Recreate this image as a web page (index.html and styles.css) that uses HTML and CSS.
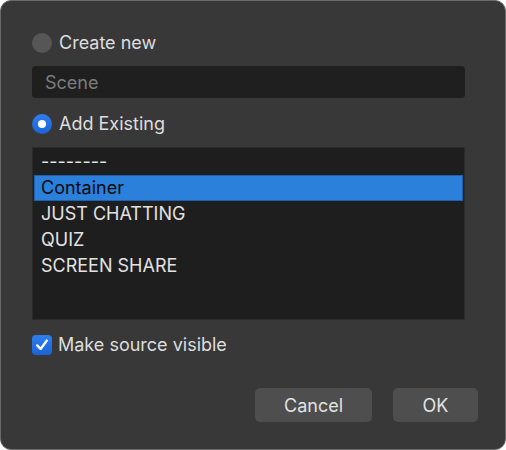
FILE: index.html
```html
<!DOCTYPE html>
<html>
<head>
<meta charset="utf-8">
<link rel="stylesheet" href="styles.css">
</head>
<body>
<div class="window">
  <div class="option">
    <span class="radio"></span>
    <span class="label">Create new</span>
  </div>
  <div class="field">Scene</div>
  <div class="option option-existing">
    <span class="radio radio-on"><span class="dot"></span></span>
    <span class="label">Add Existing</span>
  </div>
  <ul class="list">
    <li class="row">--------</li>
    <li class="row row-selected">Container</li>
    <li class="row">JUST CHATTING</li>
    <li class="row">QUIZ</li>
    <li class="row">SCREEN SHARE</li>
  </ul>
  <div class="option option-check">
    <span class="check">
      <svg width="20" height="20" viewBox="0 0 20 20"><path d="M5.2 10.4 L8.6 14 L14.8 5.6" fill="none" stroke="#fff" stroke-width="2.4" stroke-linecap="round" stroke-linejoin="round"/></svg>
    </span>
    <span class="label">Make source visible</span>
  </div>
  <div class="buttons">
    <button class="btn btn-cancel">Cancel</button>
    <button class="btn btn-ok">OK</button>
  </div>
</div>
</body>
</html>
```
FILE: styles.css
```css
html, body {
  margin: 0;
  padding: 0;
  background: #ffffff;
}
.window {
  box-sizing: border-box;
  width: 506px;
  height: 450px;
  background: #383838;
  border: 1px solid #6a6a6a;
  border-radius: 11px;
  padding: 32px 40px 0 31px;
  display: flex;
  flex-direction: column;
  font-family: Inter, "Liberation Sans", sans-serif;
  font-size: 18px;
  color: #dedede;
}
.option {
  display: flex;
  align-items: center;
  height: 20px;
  gap: 7px;
}
.label {
  line-height: 20px;
}
.radio {
  box-sizing: border-box;
  width: 20px;
  height: 20px;
  border-radius: 50%;
  background: #565656;
  display: flex;
  align-items: center;
  justify-content: center;
}
.radio-on {
  background: linear-gradient(#2f7ef0, #1a63d6);
}
.dot {
  width: 8px;
  height: 8px;
  border-radius: 50%;
  background: #ffffff;
}
.field {
  margin-top: 13px;
  height: 32px;
  background: #1f1f1f;
  border-radius: 4px;
  padding-left: 13px;
  display: flex;
  align-items: center;
  color: #7c7c7c;
}
.option-existing {
  margin-top: 16px;
}
.list {
  list-style: none;
  margin: 13px 0 0 0;
  padding: 1px 1px;
  height: 173px;
  box-sizing: border-box;
  background: #1e1e1e;
  border: 1px solid #2b2b2b;
}
.row {
  height: 26px;
  line-height: 26px;
  padding-left: 7px;
  color: #e2e2e2;
  box-sizing: border-box;
}
.row-selected {
  background: #2a80da;
  border: 1px solid #1e62ae;
  line-height: 24px;
  padding-left: 6px;
  color: #0a0a0a;
}
.option-check {
  margin-top: 15px;
  gap: 6px;
}
.check {
  width: 20px;
  height: 20px;
  border-radius: 4px;
  background: linear-gradient(#2f7ef0, #1a63d6);
  display: block;
}
.check svg {
  display: block;
}
.buttons {
  margin-top: 33px;
  margin-right: -13px;
  display: flex;
  justify-content: flex-end;
  gap: 21px;
}
.btn {
  height: 34px;
  border: none;
  border-radius: 5px;
  background: #4e4e4e;
  color: #e2e2e2;
  font-family: Inter, "Liberation Sans", sans-serif;
  font-size: 18px;
  padding: 0;
}
.btn-cancel {
  width: 117px;
}
.btn-ok {
  width: 85px;
}
```
